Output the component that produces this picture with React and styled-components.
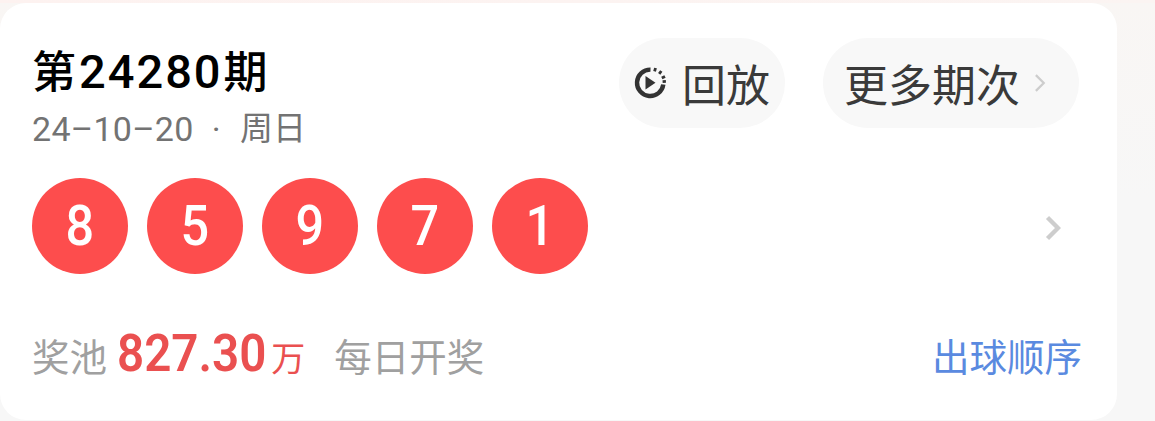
import React from "react";
import styled, { createGlobalStyle } from "styled-components";

const Global = createGlobalStyle`
  html, body { margin: 0; padding: 0; background: #f7f7f7; }
  body { font-family: Roboto, "Noto Sans CJK SC", sans-serif; }
`;

const Page = styled.div`
  width: 1155px;
  height: 421px;
  box-sizing: border-box;
  padding-top: 3px;
  overflow: hidden;
  background:
    linear-gradient(to right, #fdf2f0, #fbf4f2) top / 100% 3px no-repeat,
    linear-gradient(#f9f6f4, #f7f7f7 200px);
`;

const Card = styled.div`
  width: 1117px;
  height: 417px;
  box-sizing: border-box;
  padding: 0 35px 0 32px;
  background: #fff;
  border-radius: 26px;
  display: flex;
  flex-direction: column;
`;

const Header = styled.div`
  display: flex;
  justify-content: space-between;
  padding: 35px 3px 0 0;
  height: 175px;
  box-sizing: border-box;
`;

const Heading = styled.div`
  display: flex;
  flex-direction: column;
`;

const Title = styled.div`
  font-size: 44px;
  line-height: 68px;
  font-weight: 500;
  color: #000;
  white-space: nowrap;
`;

const Digits = styled.span`
  font-size: 47px;
  letter-spacing: 2px;
  margin: 0 1px 0 3px;
`;

const DateLine = styled.div`
  font-size: 34px;
  letter-spacing: 0.3px;
  line-height: 48px;
  color: #737373;
  white-space: nowrap;
  display: flex;
  align-items: center;
  margin-top: -2px;
`;

const Dot = styled.span`
  margin: 0 19px 0 18px;
`;

const Weekday = styled.span`
  font-size: 33px;
  letter-spacing: 0;
`;

const Actions = styled.div`
  display: flex;
  gap: 38px;
  height: 90px;
`;

const Pill = styled.div`
  display: flex;
  align-items: center;
  height: 90px;
  box-sizing: border-box;
  padding: ${(p) => p.$pad};
  border-radius: 45px;
  background: #f8f8f8;
  color: #3a3a3a;
  font-size: 44px;
  white-space: nowrap;
`;

const PillArrow = styled.span`
  display: flex;
  margin-left: 14px;
`;

const PlayIcon = styled.svg`
  margin-right: 16px;
`;

const BallRow = styled.div`
  display: flex;
  align-items: center;
  gap: 19px;
  height: 96px;
`;

const Ball = styled.div`
  width: 96px;
  height: 96px;
  border-radius: 50%;
  background: #fd4d4d;
  color: #fff;
  font-size: 56px;
  font-weight: 500;
  display: flex;
  align-items: center;
  justify-content: center;
  span {
    transform: scaleX(0.9);
  }
`;

const RowArrow = styled.span`
  display: flex;
  margin-left: auto;
  margin-right: 21px;
  margin-top: 4px;
`;

const Footer = styled.div`
  display: flex;
  align-items: baseline;
  margin-top: 53px;
  font-size: 37.5px;
  line-height: 54px;
  color: #a0a0a0;
  white-space: nowrap;
`;

const Amount = styled.span`
  margin-left: 10px;
  margin-right: -13px;
  font-size: 52px;
  font-weight: 600;
  color: #ea5050;
  transform: scaleX(0.915);
  transform-origin: left;
`;

const Unit = styled.span`
  margin-left: 4px;
  font-size: 34px;
  color: #ea5050;
`;

const Note = styled.span`
  margin-left: 29px;
`;

const OrderLink = styled.span`
  margin-left: auto;
  color: #5a8ae0;
`;

const Chevron = ({ w, h, sw }) => (
  <svg width={w} height={h} viewBox="0 0 16 26" fill="none">
    <path d="M2.5 2.5 L13 13 L2.5 23.5" stroke="#cdcdcd" strokeWidth={sw} />
  </svg>
);

const ReplayIcon = () => (
  <PlayIcon width="32" height="32" viewBox="0 0 32 32" fill="none">
    <path d="M16.5 2.6 A13.2 13.2 0 1 0 29.3 17.5" stroke="#333" strokeWidth="4.4" />
    <path d="M21.5 1 L20.6 4.4 M27.3 4 L25.2 6.8 M31 9.4 L27.8 11 M31.9 14.4 L28.6 14.6" stroke="#333" strokeWidth="2.8" />
    <path d="M11.5 9 L21.5 15.8 L11.5 22.6 Z" fill="#333" />
  </PlayIcon>
);

const balls = [8, 5, 9, 7, 1];

export default function App() {
  return (
    <Page>
      <Global />
      <Card>
        <Header>
          <Heading>
            <Title>
              第<Digits>24280</Digits>期
            </Title>
            <DateLine>
              24–10–20
              <Dot>·</Dot>
              <Weekday>周日</Weekday>
            </DateLine>
          </Heading>
          <Actions>
            <Pill $pad="0 15px">
              <ReplayIcon />
              回放
            </Pill>
            <Pill $pad="0 33px 0 21px">
              更多期次
              <PillArrow>
                <Chevron w={12} h={20} sw={3} />
              </PillArrow>
            </Pill>
          </Actions>
        </Header>
        <BallRow>
          {balls.map((n, i) => (
            <Ball key={i}>
              <span>{n}</span>
            </Ball>
          ))}
          <RowArrow>
            <Chevron w={16} h={26} sw={4.4} />
          </RowArrow>
        </BallRow>
        <Footer>
          奖池
          <Amount>827.30</Amount>
          <Unit>万</Unit>
          <Note>每日开奖</Note>
          <OrderLink>出球顺序</OrderLink>
        </Footer>
      </Card>
    </Page>
  );
}
